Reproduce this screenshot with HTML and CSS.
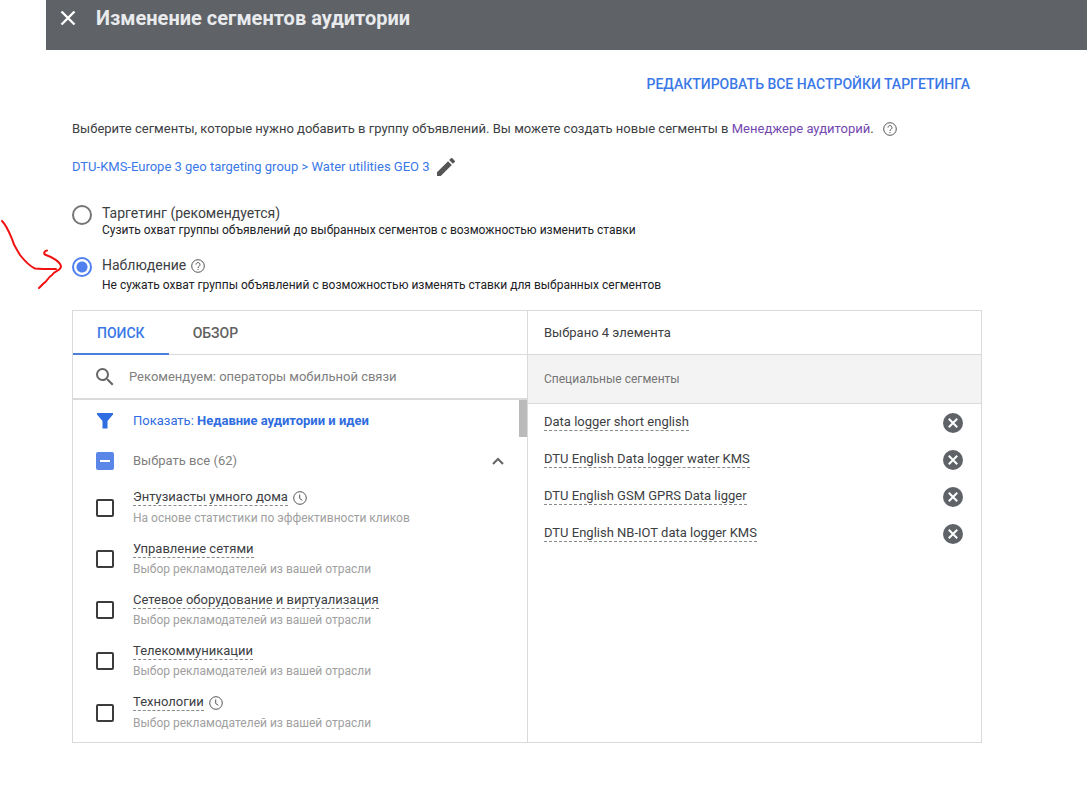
FILE: index.html
```html
<!DOCTYPE html>
<html lang="ru">
<head>
  <meta charset="UTF-8">
  <meta name="viewport" content="width=device-width, initial-scale=1">
  <title>Изменение сегментов аудитории</title>
  <link rel="stylesheet" href="styles.css">
</head>
<body>
  <!-- shared icons -->
  <svg class="sprite" aria-hidden="true">
    <symbol id="help" viewBox="0 0 14 14">
      <circle cx="7" cy="7" r="6.3" fill="none" stroke="currentColor"/>
      <path d="M5 5.6a2 2 0 1 1 3.3 1.5C7.5 7.7 7 8 7 9" fill="none" stroke="currentColor"/>
      <path d="M6.5 10h1v1h-1z" fill="currentColor"/>
    </symbol>
    <symbol id="clock" viewBox="0 0 14 14">
      <circle cx="7" cy="7" r="6.3" fill="none" stroke="currentColor"/>
      <path d="M6.7 3.5v4l2.6 1.8" fill="none" stroke="currentColor"/>
    </symbol>
    <symbol id="remove" viewBox="0 0 20 20">
      <circle cx="10" cy="10" r="10" fill="#5f6368"/>
      <path d="M5.8 5.8l8.4 8.4M14.2 5.8l-8.4 8.4" stroke="#fff" stroke-width="2"/>
    </symbol>
  </svg>

  <header class="topbar">
    <button type="button" class="icon-btn" aria-label="Закрыть">
      <svg width="16" height="16" viewBox="0 0 16 16"><path d="M1.5 1.5l13 13M14.5 1.5l-13 13" stroke="#fff" stroke-width="2.4"/></svg>
    </button>
    <h1>Изменение сегментов аудитории</h1>
  </header>

  <main class="content">
    <a href="#" class="edit-all">РЕДАКТИРОВАТЬ ВСЕ НАСТРОЙКИ ТАРГЕТИНГА</a>

    <div class="intro">
      <p>Выберите сегменты, которые нужно добавить в группу объявлений. Вы можете создать новые сегменты в <a href="#">Менеджере аудиторий</a>.</p>
      <svg class="help" width="14" height="14"><use href="#help"/></svg>
    </div>

    <div class="group">
      <a href="#">DTU-KMS-Europe 3 geo targeting group &gt; Water utilities GEO 3</a>
      <button type="button" class="icon-btn" aria-label="Изменить группу">
        <svg width="18" height="18" viewBox="3 3 18 18"><path d="M3 17.25V21h3.75L17.81 9.94l-3.75-3.75L3 17.25zM20.71 7.04a1 1 0 0 0 0-1.41l-2.34-2.34a1 1 0 0 0-1.41 0l-1.83 1.83 3.75 3.75 1.83-1.83z" fill="#555"/></svg>
      </button>
    </div>

    <div class="modes">
      <div class="mode">
        <input type="radio" name="mode" id="targeting">
        <div>
          <label for="targeting">Таргетинг (рекомендуется)</label>
          <p>Сузить охват группы объявлений до выбранных сегментов с возможностью изменить ставки</p>
        </div>
      </div>
      <div class="mode">
        <input type="radio" name="mode" id="observation" checked>
        <div>
          <div class="mode-title">
            <label for="observation">Наблюдение</label>
            <svg class="help" width="14" height="14"><use href="#help"/></svg>
          </div>
          <p>Не сужать охват группы объявлений с возможностью изменять ставки для выбранных сегментов</p>
        </div>
      </div>
      <svg class="arrow" width="66" height="74" viewBox="0 216 66 74">
        <path d="M2 221C5 224 10 234 12 239C14 247 18 251 20 255C24 260 29 266 35 268.500C41 269 49 269 56 269M47 250.500C44 251 43 254 46 255C52 257 61 262 61 267C60 271 54 271 52 275C47 278 47 282 44 283L39 288" fill="none" stroke="#f01010" stroke-width="2" stroke-linecap="round" stroke-linejoin="round"/>
      </svg>
    </div>

    <div class="panel">
      <section class="picker">
        <div class="tabs">
          <button type="button" class="tab active">ПОИСК</button>
          <button type="button" class="tab">ОБЗОР</button>
        </div>
        <div class="search">
          <svg width="18" height="18" viewBox="3 3 18 18"><path d="M15.500 14h-.79l-.28-.27A6.470 6.470 0 0 0 16 9.500 6.500 6.500 0 1 0 9.500 16c1.610 0 3.090-.59 4.230-1.570l.27.28v.79l5 4.990L20.490 19l-4.990-5zm-6 0C7.010 14 5 11.990 5 9.500S7.010 5 9.500 5 14 7.010 14 9.500 11.990 14 9.500 14z" fill="#666"/></svg>
          <input type="text" aria-label="Поиск сегментов" placeholder="Рекомендуем: операторы мобильной связи">
        </div>

        <div class="list">
          <button type="button" class="filter">
            <svg width="18" height="18" viewBox="0 0 18 18"><path d="M1 1h16v1.500L11.500 9v7.500h-5V9L1 2.500z" fill="#2f6de0"/></svg>
            <span>Показать: <b>Недавние аудитории и идеи</b></span>
          </button>
          <div class="select-all">
            <input type="checkbox" id="all">
            <label for="all">Выбрать все (62)</label>
            <button type="button" class="icon-btn" aria-label="Свернуть">
              <svg width="12" height="8" viewBox="0 0 12 8"><path d="M1 7l5-5 5 5" fill="none" stroke="#666" stroke-width="2"/></svg>
            </button>
          </div>
          <div class="item">
            <input type="checkbox" id="s1">
            <div>
              <div class="item-title timed"><label for="s1">Энтузиасты умного дома</label><svg width="14" height="14"><use href="#clock"/></svg></div>
              <p>На основе статистики по эффективности кликов</p>
            </div>
          </div>
          <div class="item">
            <input type="checkbox" id="s2">
            <div>
              <div class="item-title"><label for="s2">Управление сетями</label></div>
              <p>Выбор рекламодателей из вашей отрасли</p>
            </div>
          </div>
          <div class="item">
            <input type="checkbox" id="s3">
            <div>
              <div class="item-title"><label for="s3">Сетевое оборудование и виртуализация</label></div>
              <p>Выбор рекламодателей из вашей отрасли</p>
            </div>
          </div>
          <div class="item">
            <input type="checkbox" id="s4">
            <div>
              <div class="item-title"><label for="s4">Телекоммуникации</label></div>
              <p>Выбор рекламодателей из вашей отрасли</p>
            </div>
          </div>
          <div class="item">
            <input type="checkbox" id="s5">
            <div>
              <div class="item-title timed"><label for="s5">Технологии</label><svg width="14" height="14"><use href="#clock"/></svg></div>
              <p>Выбор рекламодателей из вашей отрасли</p>
            </div>
          </div>
          <div class="scroll-thumb"></div>
        </div>
      </section>

      <section class="selected">
        <div class="count">Выбрано 4 элемента</div>
        <h2>Специальные сегменты</h2>
        <ul>
          <li><span>Data logger short english</span><button type="button" class="icon-btn" aria-label="Удалить"><svg width="20" height="20"><use href="#remove"/></svg></button></li>
          <li><span>DTU English Data logger water KMS</span><button type="button" class="icon-btn" aria-label="Удалить"><svg width="20" height="20"><use href="#remove"/></svg></button></li>
          <li><span>DTU English GSM GPRS Data ligger</span><button type="button" class="icon-btn" aria-label="Удалить"><svg width="20" height="20"><use href="#remove"/></svg></button></li>
          <li><span>DTU English NB-IOT data logger KMS</span><button type="button" class="icon-btn" aria-label="Удалить"><svg width="20" height="20"><use href="#remove"/></svg></button></li>
        </ul>
      </section>
    </div>
  </main>

  <script>
    // only part of the list is selected
    document.getElementById("all").indeterminate = true;
  </script>
</body>
</html>
```
FILE: styles.css
```css
* {
  box-sizing: border-box;
}
body {
  margin: 0;
  background: #fff;
  color: #3c4043;
  font-family: Roboto, Arial, sans-serif;
  font-size: 13px;
  line-height: 20px;
}
h1, h2, p, ul {
  margin: 0;
  padding: 0;
}
a {
  color: #3b78e7;
  text-decoration: none;
}
button, input {
  font: inherit;
}
svg {
  display: block;
  flex: none;
}
.sprite {
  display: none;
}
.icon-btn {
  display: flex;
  padding: 0;
  border: none;
  background: none;
  cursor: pointer;
}
.topbar {
  display: flex;
  align-items: center;
  gap: 20px;
  margin-left: 46px;
  padding: 4px 14px 18px;
  background: #5f6266;
}
.topbar h1 {
  color: #e8eaed;
  font-size: 20px;
  font-weight: 700;
  line-height: 28px;
}
.content {
  display: flex;
  flex-direction: column;
  padding: 24px 105px 24px 72px;
}
.edit-all {
  align-self: flex-end;
  margin-right: 12px;
  font-size: 14px;
  font-weight: 500;
}
.intro {
  display: flex;
  align-items: center;
  gap: 9px;
  margin-top: 25px;
}
.intro a {
  color: #7248b0;
}
.help {
  color: #555;
}
.group {
  display: flex;
  align-items: center;
  gap: 7px;
  margin-top: 18px;
}

/* targeting mode */
.modes {
  position: relative;
  display: flex;
  flex-direction: column;
  gap: 18px;
  margin-top: 28px;
}
.mode {
  display: flex;
  gap: 10px;
  line-height: 17px;
}
.mode label {
  display: block;
  font-size: 14px;
}
.mode p {
  color: #202124;
  font-size: 12px;
}
.mode-title {
  display: flex;
  align-items: center;
  gap: 5px;
  padding-bottom: 3px;
}
.mode input {
  appearance: none;
  flex: none;
  width: 20px;
  height: 20px;
  margin: 0;
  border: 2px solid #757575;
  border-radius: 50%;
}
.mode input:checked {
  border-color: #4f80ee;
  background: radial-gradient(circle, #4f80ee 5px, #fff 6px);
}
.arrow {
  position: absolute;
  left: -72px;
  top: 11px;
}

/* two-column panel */
.panel {
  display: grid;
  grid-template-columns: 455fr 453fr;
  margin-top: 16px;
  border: 1px solid #dadada;
}
.picker {
  display: flex;
  flex-direction: column;
  border-right: 1px solid #dadada;
}
.tabs {
  display: flex;
  height: 44px;
  border-bottom: 1px solid #dadada;
}
.tab {
  height: 44px;
  padding: 2px 24px 0;
  border: none;
  border-bottom: 2px solid transparent;
  background: none;
  color: #616161;
  font-size: 14px;
  font-weight: 500;
}
.tab.active {
  border-color: #4a7fdc;
  color: #3b78e7;
}
.search {
  display: flex;
  align-items: center;
  gap: 15px;
  height: 45px;
  padding: 0 23px;
  border-bottom: 2px solid #dadada;
}
.search input {
  flex: 1;
  min-width: 0;
  padding: 0;
  border: none;
  outline: none;
}
.search input::placeholder {
  color: #808080;
}
.list {
  position: relative;
  padding-bottom: 4px;
}
.filter {
  display: flex;
  align-items: center;
  gap: 19px;
  width: 100%;
  height: 41px;
  padding: 0 23px;
  border: none;
  background: none;
  color: #2f6de0;
  text-align: left;
}
.select-all {
  display: flex;
  align-items: center;
  gap: 19px;
  height: 40px;
  padding: 0 23px;
  color: #808080;
}
.select-all label {
  flex: 1;
}
.item {
  display: flex;
  align-items: center;
  gap: 19px;
  padding: 6px 23px 5px;
}
.item-title {
  display: flex;
  align-items: center;
  gap: 5px;
  height: 20px;
}
.item-title.timed {
  height: 21px;
}
.item-title svg {
  color: #555;
}
.item-title label, .selected li span {
  border-bottom: 1px dashed #8a8a8a;
  line-height: 16px;
}
.item p {
  color: #a0a0a0;
  font-size: 12px;
}
.list input {
  appearance: none;
  flex: none;
  width: 18px;
  height: 18px;
  margin: 0;
  border: 2px solid #3c3c3c;
  border-radius: 2px;
}
.list input:checked {
  background: #3c3c3c;
}
.list input:indeterminate {
  border-color: #5a86e8;
  background: linear-gradient(#fff, #fff) center / 10px 2px no-repeat #5a86e8;
}
.scroll-thumb {
  position: absolute;
  top: 0;
  right: 0;
  width: 8px;
  height: 37px;
  background: #bababa;
}
.count {
  height: 44px;
  padding: 12px 16px;
  border-bottom: 1px solid #dadada;
}
.selected h2 {
  padding: 14px 16px;
  border-bottom: 1px solid #dadada;
  background: #f3f3f3;
  color: #757575;
  font-size: 12px;
  font-weight: 400;
}
.selected ul {
  list-style: none;
}
.selected li {
  display: flex;
  align-items: center;
  justify-content: space-between;
  height: 37px;
  padding: 0 18px 0 16px;
}
```
